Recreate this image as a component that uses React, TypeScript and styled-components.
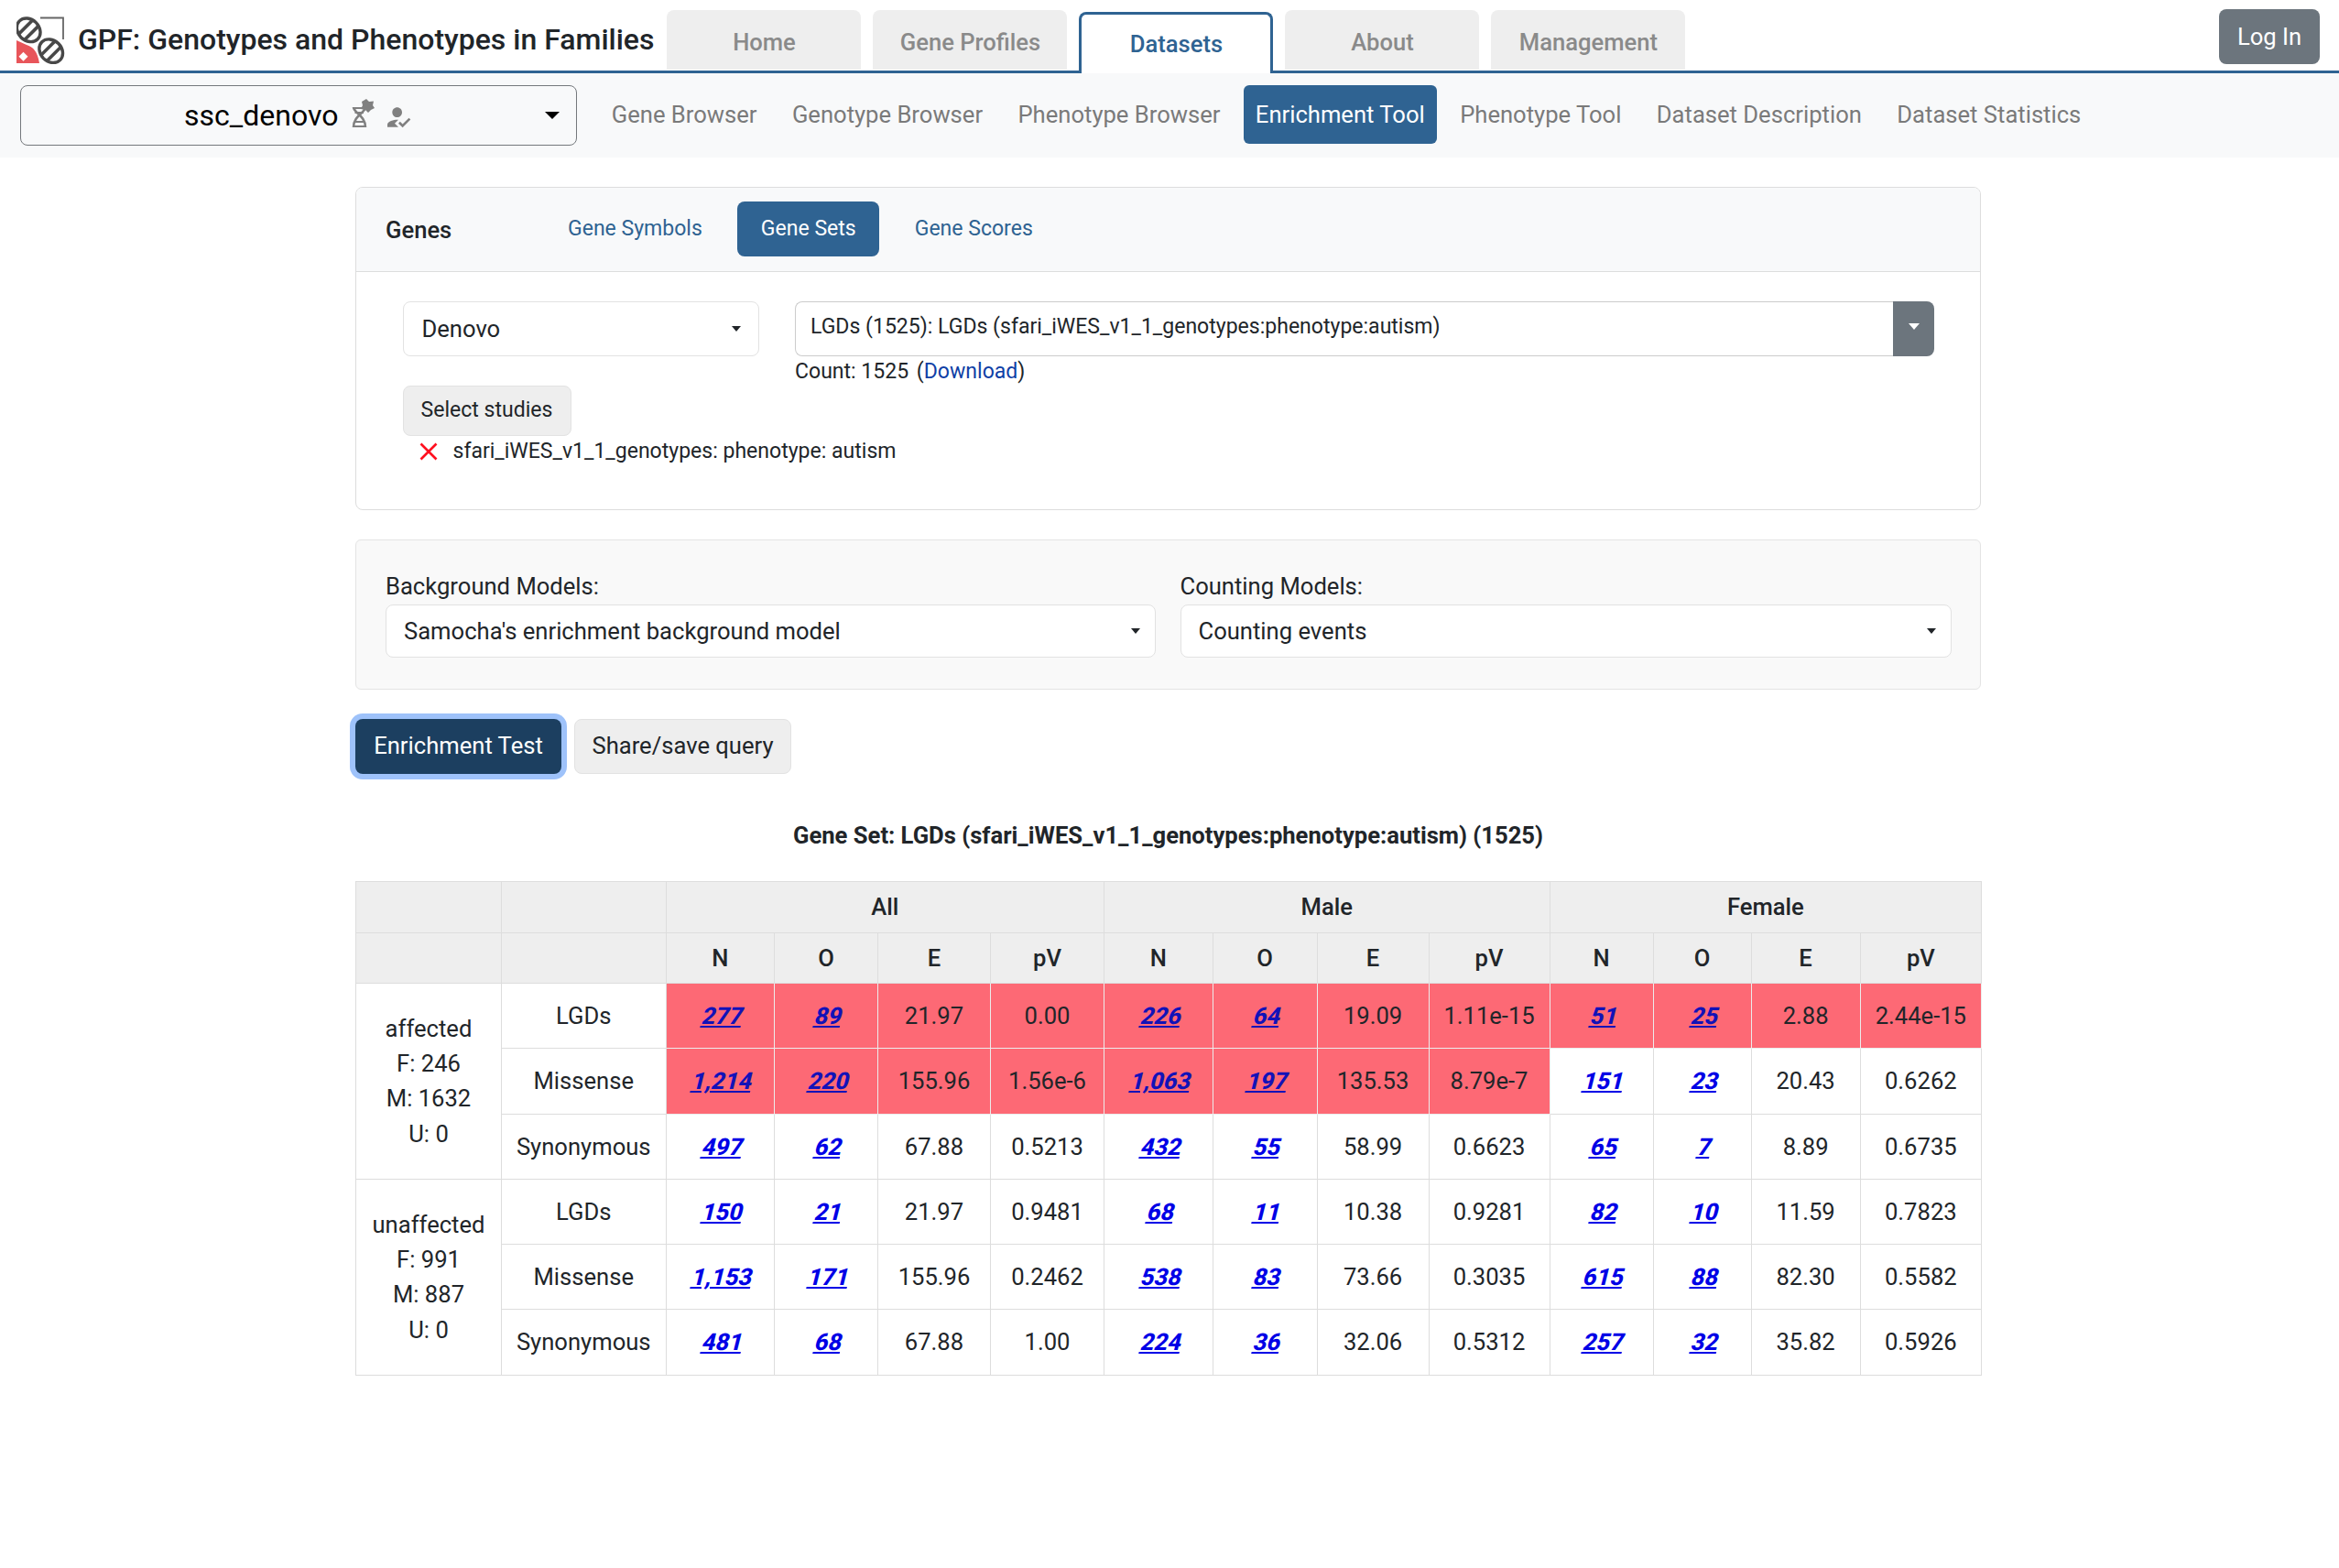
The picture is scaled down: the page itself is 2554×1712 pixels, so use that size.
import React from "react";
import styled, { createGlobalStyle } from "styled-components";
import { MdHowToReg } from "react-icons/md";

const GlobalStyle = createGlobalStyle`
    html, body {
        margin: 0;
        padding: 0;
        background: #ffffff;
        font-family: Roboto, "Liberation Sans", sans-serif;
        font-size: 25.6px;
        line-height: 1.5;
        color: #212529;
    }
    * {
        box-sizing: border-box;
    }
`;

const Header = styled.header`
    height: 80px;
    display: flex;
    align-items: flex-start;
    border-bottom: 3px solid #2f6392;
    padding-left: 18px;
`;

const Logo = styled.svg`
    width: 53px;
    height: 52px;
    margin-top: 18px;
    flex: none;
`;

const Title = styled.div`
    margin: 19px 14px 0 14px;
    font-size: 32px;
    line-height: 48px;
    font-weight: 500;
    white-space: nowrap;
`;

const Tabs = styled.nav`
    display: flex;
    gap: 13px;
    height: 77px;
`;

const Tab = styled.div<{ $active?: boolean }>`
    width: 212px;
    margin-top: ${(p) => (p.$active ? "13px" : "11px")};
    height: ${(p) => (p.$active ? "67px" : "65px")};
    padding-top: ${(p) => (p.$active ? "0" : "5px")};
    display: flex;
    align-items: center;
    justify-content: center;
    font-weight: 500;
    border-radius: 8px 8px 0 0;
    color: ${(p) => (p.$active ? "#2f6392" : "#8a8a8a")};
    background: ${(p) => (p.$active ? "#ffffff" : "#eeeeee")};
    border: ${(p) => (p.$active ? "3px solid #2f6392" : "none")};
    border-bottom: none;
    position: relative;
    z-index: 1;
`;

const LoginButton = styled.div`
    margin: 10px 21px 0 auto;
    width: 110px;
    height: 60px;
    display: flex;
    align-items: center;
    justify-content: center;
    border-radius: 8px;
    background: #6c757d;
    color: #ffffff;
`;

const SubNav = styled.div`
    height: 92px;
    background: #f8f9fa;
    padding: 13px 0 0 22px;
    display: flex;
    align-items: flex-start;
`;

const DatasetSelect = styled.div`
    width: 608px;
    height: 66px;
    margin-right: 25px;
    border: 1.6px solid #74787c;
    border-radius: 8px;
    display: flex;
    align-items: center;
    padding: 0 18px 0 178px;
    color: #000000;
    font-size: 32px;
`;

const DatasetName = styled.span`
    margin-right: 15px;
`;

const DnaIcon = styled.svg`
    width: 25px;
    height: 32px;
    margin: -4px 10px 0 0;
`;

const PersonIcon = styled(MdHowToReg)`
    width: 32px;
    height: 32px;
    color: #808080;
    margin-top: 3px;
`;

const Caret = styled.span<{ $size?: number; $color?: string; $centered?: boolean }>`
    width: 0;
    height: 0;
    margin-left: ${(p) => (p.$centered ? "0" : "auto")};
    flex: none;
    border-left: ${(p) => (p.$size ?? 11) / 2}px solid transparent;
    border-right: ${(p) => (p.$size ?? 11) / 2}px solid transparent;
    border-top: ${(p) => ((p.$size ?? 11) * 6) / 11}px solid ${(p) => p.$color ?? "#212529"};
`;

const NavLink = styled.div<{ $active?: boolean }>`
    height: 64px;
    padding: 0 12.8px;
    margin-right: 12.8px;
    display: flex;
    align-items: center;
    border-radius: 6px;
    white-space: nowrap;
    color: ${(p) => (p.$active ? "#ffffff" : "#7a7a7a")};
    background: ${(p) => (p.$active ? "#2f6392" : "transparent")};
`;

const Main = styled.main`
    width: 1775px;
    margin-left: 388px;
    padding-top: 32px;
`;

const Card = styled.section`
    height: 353px;
    border: 1.6px solid #dddddd;
    border-radius: 8px;
    overflow: hidden;
`;

const CardHeader = styled.div`
    height: 92px;
    background: #f8f9fa;
    border-bottom: 1.6px solid #dddddd;
    display: flex;
    align-items: center;
    padding-left: 32px;
`;

const CardTitle = styled.div`
    width: 173.4px;
    font-weight: 500;
    padding-top: 2px;
`;

const Pill = styled.div<{ $active?: boolean }>`
    height: 60px;
    margin: -2px 12.8px 0 0;
    padding: 2px 25.6px 0;
    display: flex;
    align-items: center;
    font-size: 23.04px;
    border-radius: 8px;
    white-space: nowrap;
    color: ${(p) => (p.$active ? "#ffffff" : "#2f6392")};
    background: ${(p) => (p.$active ? "#2f6392" : "transparent")};
`;

const CardBody = styled.div`
    display: flex;
    padding: 32px 0 0 50.5px;
    gap: 39.5px;
`;

const LeftColumn = styled.div`
    width: 389px;
    flex: none;
`;

const RightColumn = styled.div`
    width: 1244px;
    flex: none;
`;

const SelectBox = styled.div<{ $compact?: boolean }>`
    height: ${(p) => (p.$compact ? "58px" : "60px")};
    display: flex;
    align-items: center;
    background: #ffffff;
    border: 1.6px solid #e2e2e2;
    border-radius: 8px;
    padding: ${(p) => (p.$compact ? "0 16px 0 19px" : "0 19px 0 20px")};
    white-space: nowrap;
`;

const InputGroup = styled.div`
    display: flex;
    height: 60px;
`;

const GeneSetInput = styled.div`
    flex: 1;
    display: flex;
    align-items: flex-start;
    padding: 10px 16px 0;
    font-size: 23.04px;
    line-height: 33.6px;
    border: 1.6px solid #cccccc;
    border-right: none;
    border-radius: 8px 0 0 8px;
`;

const GroupButton = styled.div`
    width: 45px;
    display: flex;
    align-items: center;
    justify-content: center;
    padding-bottom: 6px;
    background: #6c757d;
    border-radius: 0 8px 8px 0;
`;

const CountLine = styled.div`
    font-size: 23.04px;
    line-height: 33.6px;
`;

const DownloadGroup = styled.span`
    margin-left: 3px;
`;

const DownloadLink = styled.a`
    color: #0f3fa6;
    text-decoration: none;
`;

const SelectStudies = styled.div`
    width: 184px;
    height: 55px;
    margin-top: 32px;
    display: flex;
    align-items: center;
    justify-content: center;
    font-size: 23.04px;
    background: #eeeeee;
    border: 1.6px solid #e2e2e2;
    border-radius: 8px;
`;

const StudyRow = styled.div`
    display: flex;
    align-items: center;
    height: 34px;
    margin: 0 0 0 18px;
    font-size: 23.04px;
    white-space: nowrap;
`;

const RemoveIcon = styled.svg`
    width: 20px;
    height: 20px;
    margin-right: 17px;
    flex: none;
`;

const ModelsPanel = styled.section`
    height: 164px;
    margin-top: 32px;
    background: #f9f9f9;
    border: 1.6px solid #e4e4e4;
    border-radius: 6px;
    padding: 31px 31px 0 32px;
    display: flex;
    gap: 26.5px;
`;

const ModelField = styled.div<{ $width: number }>`
    width: ${(p) => p.$width}px;
`;

const ModelLabel = styled.div`
    height: 39px;
    line-height: 38px;
`;

const Actions = styled.div`
    display: flex;
    gap: 14px;
    margin-top: 32px;
`;

const PrimaryButton = styled.div`
    height: 60px;
    width: 225px;
    padding-bottom: 1px;
    display: flex;
    align-items: center;
    justify-content: center;
    color: #ffffff;
    background: #1c3f60;
    border-radius: 8px;
    box-shadow: 0 0 0 6px #9ec2fa;
`;

const SecondaryButton = styled.div`
    height: 60px;
    width: 237px;
    padding-bottom: 1px;
    display: flex;
    align-items: center;
    justify-content: center;
    background: #eeeeee;
    border: 1.6px solid #e2e2e2;
    border-radius: 8px;
`;

const ResultTitle = styled.div`
    margin-top: 47px;
    text-align: center;
    font-weight: 700;
    line-height: 40px;
`;

const Table = styled.table`
    width: 1775px;
    margin-top: 30px;
    table-layout: fixed;
    border-collapse: collapse;
    border: 1.6px solid #dddddd;
`;

const HeadCell = styled.th`
    height: 55.5px;
    padding: 0;
    background: #eeeeee;
    font-weight: 500;
    text-align: center;
    border: 1.6px solid #dddddd;
`;

const BodyRow = styled.tr`
    height: 71.3px;
`;

const Cell = styled.td<{ $hit?: boolean }>`
    padding: 0;
    text-align: center;
    white-space: nowrap;
    background: ${(p) => (p.$hit ? "#fd6975" : "#ffffff")};
    border: 1.6px solid ${(p) => (p.$hit ? "#ececec" : "#dddddd")};
`;

// the numbers lean further than Roboto's own italic, like a slanted bold
const CountLink = styled.a<{ $hit?: boolean }>`
    display: inline-block;
    font-weight: 800;
    text-decoration: underline;
    transform: skewX(-14deg);
    transform-origin: 50% 85%;
    color: ${(p) => (p.$hit ? "#1212b8" : "#0000e6")};
`;

const columnWidths = [159, 179.5, 118.5, 113, 123, 124, 118.5, 114, 122, 132, 113, 107, 119, 132.5];

type Stat = [string, string, string, string];

type EffectRow = {
    effect: string;
    all: Stat;
    male: Stat;
    female: Stat;
    hits: [boolean, boolean, boolean];
};

type Group = {
    lines: string[];
    rows: EffectRow[];
};

const groups: Group[] = [
    {
        lines: ["affected", "F: 246", "M: 1632", "U: 0"],
        rows: [
            {
                effect: "LGDs",
                all: ["277", "89", "21.97", "0.00"],
                male: ["226", "64", "19.09", "1.11e-15"],
                female: ["51", "25", "2.88", "2.44e-15"],
                hits: [true, true, true],
            },
            {
                effect: "Missense",
                all: ["1,214", "220", "155.96", "1.56e-6"],
                male: ["1,063", "197", "135.53", "8.79e-7"],
                female: ["151", "23", "20.43", "0.6262"],
                hits: [true, true, false],
            },
            {
                effect: "Synonymous",
                all: ["497", "62", "67.88", "0.5213"],
                male: ["432", "55", "58.99", "0.6623"],
                female: ["65", "7", "8.89", "0.6735"],
                hits: [false, false, false],
            },
        ],
    },
    {
        lines: ["unaffected", "F: 991", "M: 887", "U: 0"],
        rows: [
            {
                effect: "LGDs",
                all: ["150", "21", "21.97", "0.9481"],
                male: ["68", "11", "10.38", "0.9281"],
                female: ["82", "10", "11.59", "0.7823"],
                hits: [false, false, false],
            },
            {
                effect: "Missense",
                all: ["1,153", "171", "155.96", "0.2462"],
                male: ["538", "83", "73.66", "0.3035"],
                female: ["615", "88", "82.30", "0.5582"],
                hits: [false, false, false],
            },
            {
                effect: "Synonymous",
                all: ["481", "68", "67.88", "1.00"],
                male: ["224", "36", "32.06", "0.5312"],
                female: ["257", "32", "35.82", "0.5926"],
                hits: [false, false, false],
            },
        ],
    },
];

const tabs = ["Home", "Gene Profiles", "Datasets", "About", "Management"];
const navLinks = [
    "Gene Browser",
    "Genotype Browser",
    "Phenotype Browser",
    "Enrichment Tool",
    "Phenotype Tool",
    "Dataset Description",
    "Dataset Statistics",
];

const lenses = [
    { id: "lensA", cx: 13.2, cy: 14.8 },
    { id: "lensB", cx: 37.7, cy: 37.7 },
];

function GpfLogo() {
    return (
        <Logo viewBox="0 0 53 52">
            <defs>
                {lenses.map(({ id, cx, cy }) => (
                    <clipPath key={id} id={id}>
                        <ellipse cx={cx} cy={cy} rx="11.5" ry="14" transform={`rotate(-45 ${cx} ${cy})`} />
                    </clipPath>
                ))}
            </defs>
            <path d="M26 1.5H51V25" fill="none" stroke="#666666" strokeWidth="1.8" />
            <path d="M0 26 L11 31 C18 33 23 38 25 51 H0 Z" fill="#e8555a" />
            <path d="M7.5 38.7 L12.5 43.7 L7.5 48.7 L2.5 43.7 Z" fill="#ffffff" />
            {lenses.map(({ id, cx, cy }) => (
                <g key={id}>
                    <ellipse
                        cx={cx}
                        cy={cy}
                        rx="11.5"
                        ry="14"
                        transform={`rotate(-45 ${cx} ${cy})`}
                        fill="#ffffff"
                        stroke="#484848"
                        strokeWidth="3.4"
                    />
                    <g clipPath={`url(#${id})`} stroke="#484848" strokeWidth="3.6">
                        <line x1={cx - 26.4} y1={cy + 20} x2={cx + 13.6} y2={cy - 20} />
                        <line x1={cx - 13.6} y1={cy + 20} x2={cx + 26.4} y2={cy - 20} />
                    </g>
                </g>
            ))}
        </Logo>
    );
}

function DnaStarIcon() {
    return (
        <DnaIcon viewBox="0 0 25 32">
            <path
                d="M2 9 C2 15 15 18 15 31 M15 9 C15 15 2 18 2 31"
                fill="none"
                stroke="#808080"
                strokeWidth="2.6"
            />
            <path d="M1 10 H12 M3.5 15 H13 M3.5 25 H13 M1 30 H16" stroke="#808080" strokeWidth="2.2" />
            <path
                d="M16 0 L19 3 L24 2.5 L23 7 L25 10 L21 12 L18 15 L15 12 L10 11 L12 7 L11 3 Z"
                fill="#808080"
            />
        </DnaIcon>
    );
}

function StatCells({ stat, hit }: { stat: Stat; hit: boolean }) {
    return (
        <>
            <Cell $hit={hit}>
                <CountLink $hit={hit} href="#">{stat[0]}</CountLink>
            </Cell>
            <Cell $hit={hit}>
                <CountLink $hit={hit} href="#">{stat[1]}</CountLink>
            </Cell>
            <Cell $hit={hit}>{stat[2]}</Cell>
            <Cell $hit={hit}>{stat[3]}</Cell>
        </>
    );
}

function EnrichmentTable() {
    const subHeads = ["N", "O", "E", "pV"];
    return (
        <Table>
            <colgroup>
                {columnWidths.map((w, i) => (
                    <col key={i} style={{ width: w }} />
                ))}
            </colgroup>
            <thead>
                <tr>
                    <HeadCell />
                    <HeadCell />
                    <HeadCell colSpan={4}>All</HeadCell>
                    <HeadCell colSpan={4}>Male</HeadCell>
                    <HeadCell colSpan={4}>Female</HeadCell>
                </tr>
                <tr>
                    <HeadCell />
                    <HeadCell />
                    {[0, 1, 2].flatMap((g) =>
                        subHeads.map((h) => <HeadCell key={`${g}${h}`}>{h}</HeadCell>)
                    )}
                </tr>
            </thead>
            <tbody>
                {groups.map((group) =>
                    group.rows.map((row, i) => (
                        <BodyRow key={`${group.lines[0]}-${row.effect}`}>
                            {i === 0 && (
                                <Cell rowSpan={3}>
                                    {group.lines.map((line) => (
                                        <div key={line}>{line}</div>
                                    ))}
                                </Cell>
                            )}
                            <Cell>{row.effect}</Cell>
                            <StatCells stat={row.all} hit={row.hits[0]} />
                            <StatCells stat={row.male} hit={row.hits[1]} />
                            <StatCells stat={row.female} hit={row.hits[2]} />
                        </BodyRow>
                    ))
                )}
            </tbody>
        </Table>
    );
}

export default function App() {
    return (
        <>
            <GlobalStyle />
            <Header>
                <GpfLogo />
                <Title>GPF: Genotypes and Phenotypes in Families</Title>
                <Tabs>
                    {tabs.map((tab) => (
                        <Tab key={tab} $active={tab === "Datasets"}>{tab}</Tab>
                    ))}
                </Tabs>
                <LoginButton>Log In</LoginButton>
            </Header>
            <SubNav>
                <DatasetSelect>
                    <DatasetName>ssc_denovo</DatasetName>
                    <DnaStarIcon />
                    <PersonIcon />
                    <Caret $size={16} $color="#000000" />
                </DatasetSelect>
                {navLinks.map((link) => (
                    <NavLink key={link} $active={link === "Enrichment Tool"}>{link}</NavLink>
                ))}
            </SubNav>
            <Main>
                <Card>
                    <CardHeader>
                        <CardTitle>Genes</CardTitle>
                        <Pill>Gene Symbols</Pill>
                        <Pill $active>Gene Sets</Pill>
                        <Pill>Gene Scores</Pill>
                    </CardHeader>
                    <CardBody>
                        <LeftColumn>
                            <SelectBox>
                                Denovo
                                <Caret />
                            </SelectBox>
                            <SelectStudies>Select studies</SelectStudies>
                            <StudyRow>
                                <RemoveIcon viewBox="0 0 20 20">
                                    <path d="M1.5 1.5 L18.5 18.5 M18.5 1.5 L1.5 18.5" stroke="#ff0f1f" strokeWidth="2.6" />
                                </RemoveIcon>
                                sfari_iWES_v1_1_genotypes: phenotype: autism
                            </StudyRow>
                        </LeftColumn>
                        <RightColumn>
                            <InputGroup>
                                <GeneSetInput>LGDs (1525): LGDs (sfari_iWES_v1_1_genotypes:phenotype:autism)</GeneSetInput>
                                <GroupButton>
                                    <Caret $size={13} $color="#ffffff" $centered />
                                </GroupButton>
                            </InputGroup>
                            <CountLine>
                                Count: 1525 <DownloadGroup>(<DownloadLink href="#">Download</DownloadLink>)</DownloadGroup>
                            </CountLine>
                        </RightColumn>
                    </CardBody>
                </Card>
                <ModelsPanel>
                    <ModelField $width={841}>
                        <ModelLabel>Background Models:</ModelLabel>
                        <SelectBox $compact>
                            Samocha's enrichment background model
                            <Caret />
                        </SelectBox>
                    </ModelField>
                    <ModelField $width={842}>
                        <ModelLabel>Counting Models:</ModelLabel>
                        <SelectBox $compact>
                            Counting events
                            <Caret />
                        </SelectBox>
                    </ModelField>
                </ModelsPanel>
                <Actions>
                    <PrimaryButton>Enrichment Test</PrimaryButton>
                    <SecondaryButton>Share/save query</SecondaryButton>
                </Actions>
                <ResultTitle>Gene Set: LGDs (sfari_iWES_v1_1_genotypes:phenotype:autism) (1525)</ResultTitle>
                <EnrichmentTable />
            </Main>
        </>
    );
}
